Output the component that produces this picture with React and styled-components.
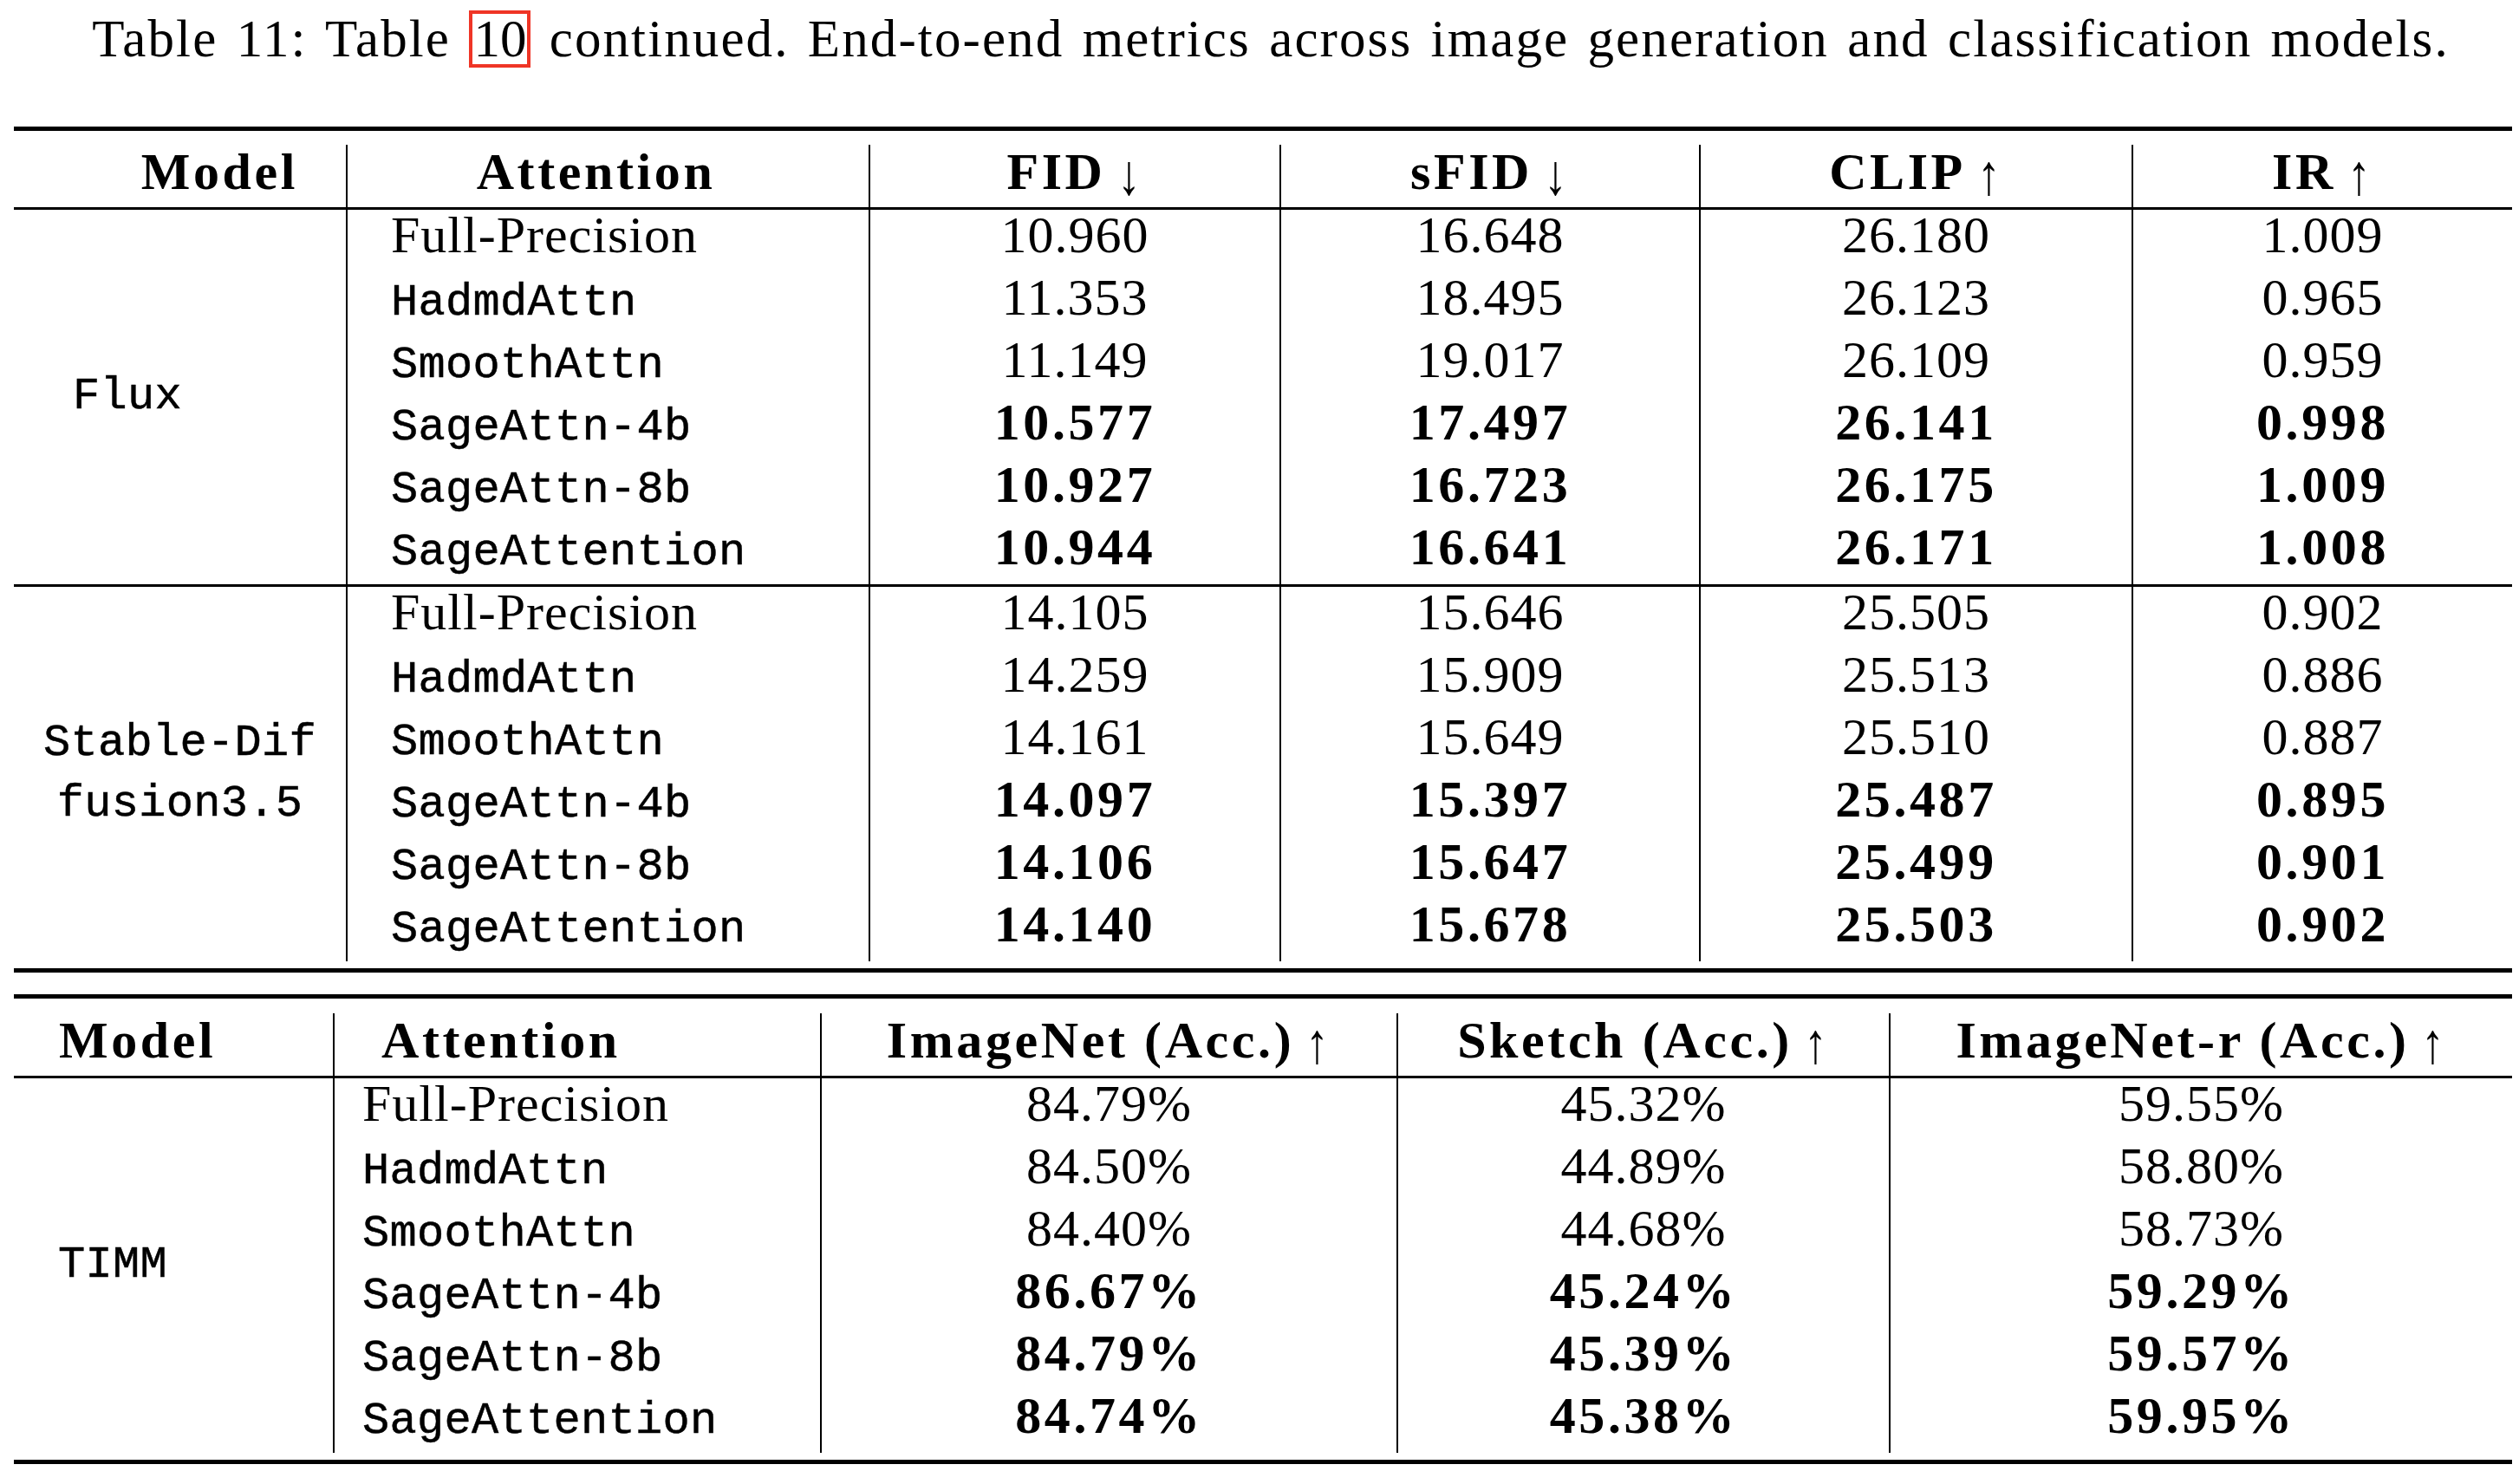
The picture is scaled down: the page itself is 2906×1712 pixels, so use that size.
import React from "react";
import styled, { createGlobalStyle } from "styled-components";

const GlobalStyle = createGlobalStyle`
  html, body {
    margin: 0;
    padding: 0;
    background: #fff;
  }
  body {
    font-family: "Liberation Serif", "Times New Roman", serif;
    color: #000;
  }
`;

const Page = styled.div`
  width: 2906px;
  padding-top: 9px;
`;

const Caption = styled.p`
  margin: 0 0 65px;
  padding-left: 26px;
  text-align: center;
  font-size: 61px;
  line-height: 72px;
  letter-spacing: 2.1px;
  word-spacing: 4px;
`;

const RefBox = styled.span`
  display: inline-block;
  border: 4px solid #ef3526;
  padding: 0 1px;
  line-height: 58px;
  letter-spacing: 0;
`;

const Table = styled.table`
  border-collapse: collapse;
  table-layout: fixed;
  width: 2882px;
  margin: ${({ $top }) => $top}px 0 0 16px;
  border-top: 5px solid #000;
  border-bottom: 5px solid #000;
`;

const Spacer = styled.tr`
  height: ${({ $h }) => $h}px;

  td {
    padding: 0;
    height: ${({ $h }) => $h}px;
  }
`;

const Row = styled.tr`
  height: 72px;
`;

const Cell = styled.td`
  height: 72px;
  padding: 0 ${({ $pr }) => $pr || 0}px 0 ${({ $pl }) => $pl || 0}px;
  text-align: ${({ $align }) => $align || "center"};
  vertical-align: baseline;
  border-left: ${({ $line }) => ($line ? "2px solid #000" : "none")};
  border-bottom: ${({ $head }) => ($head ? "3px solid #000" : "none")};
  border-top: ${({ $mid }) => ($mid ? "3px solid #000" : "none")};
  font-size: 60px;
  line-height: 58px;
  font-weight: ${({ $bold }) => ($bold ? 700 : 400)};
  letter-spacing: ${({ $bold }) => ($bold ? "3.6px" : "1px")};
  white-space: nowrap;
`;

const ModelCell = styled.td`
  padding: 0 0 0 ${({ $pl }) => $pl || 0}px;
  text-align: ${({ $align }) => $align || "left"};
  vertical-align: middle;
  border-top: ${({ $mid }) => ($mid ? "3px solid #000" : "none")};
  font-family: "Liberation Mono", "DejaVu Sans Mono", monospace;
  font-size: 52px;
  line-height: 70px;
  letter-spacing: 0.3px;
  -webkit-text-stroke: 0.5px #000;
  white-space: nowrap;
`;

const Mono = styled.span`
  font-family: "Liberation Mono", "DejaVu Sans Mono", monospace;
  font-size: 52px;
  font-weight: 400;
  letter-spacing: 0.3px;
  -webkit-text-stroke: 0.5px #000;
`;

const Arrow = styled.span`
  display: inline-block;
  font-weight: 400;
  font-size: 66px;
  letter-spacing: 0;
  margin-left: 10px;
  transform: scaleX(0.8) translateY(6px);
`;

const methods = [
  { name: "Full-Precision", mono: false, bold: false },
  { name: "HadmdAttn", mono: true, bold: false },
  { name: "SmoothAttn", mono: true, bold: false },
  { name: "SageAttn-4b", mono: true, bold: true },
  { name: "SageAttn-8b", mono: true, bold: true },
  { name: "SageAttention", mono: true, bold: true },
];

const genSections = [
  {
    model: ["Flux"],
    align: "left",
    pl: 68,
    values: [
      ["10.960", "16.648", "26.180", "1.009"],
      ["11.353", "18.495", "26.123", "0.965"],
      ["11.149", "19.017", "26.109", "0.959"],
      ["10.577", "17.497", "26.141", "0.998"],
      ["10.927", "16.723", "26.175", "1.009"],
      ["10.944", "16.641", "26.171", "1.008"],
    ],
  },
  {
    model: ["Stable-Dif", "fusion3.5"],
    align: "center",
    pl: 0,
    values: [
      ["14.105", "15.646", "25.505", "0.902"],
      ["14.259", "15.909", "25.513", "0.886"],
      ["14.161", "15.649", "25.510", "0.887"],
      ["14.097", "15.397", "25.487", "0.895"],
      ["14.106", "15.647", "25.499", "0.901"],
      ["14.140", "15.678", "25.503", "0.902"],
    ],
  },
];

const timmValues = [
  ["84.79%", "45.32%", "59.55%"],
  ["84.50%", "44.89%", "58.80%"],
  ["84.40%", "44.68%", "58.73%"],
  ["86.67%", "45.24%", "59.29%"],
  ["84.79%", "45.39%", "59.57%"],
  ["84.74%", "45.38%", "59.95%"],
];

const ModelName = ({ lines }) =>
  lines.map((l, i) => (
    <React.Fragment key={l}>
      {i > 0 && <br />}
      {l}
    </React.Fragment>
  ));

const MethodName = ({ m }) => (m.mono ? <Mono>{m.name}</Mono> : m.name);

const App = () => (
  <>
    <GlobalStyle />
    <Page>
      <Caption>
        Table 11: Table <RefBox>10</RefBox> continued. End-to-end metrics
        across image generation and classification models.
      </Caption>

      <Table $top={0}>
        <colgroup>
          <col style={{ width: 384 }} />
          <col style={{ width: 603 }} />
          <col style={{ width: 474 }} />
          <col style={{ width: 484 }} />
          <col style={{ width: 499 }} />
          <col style={{ width: 438 }} />
        </colgroup>
        <tbody>
          <Spacer $h={16}>
            <td colSpan={6} />
          </Spacer>
          <Row>
            <Cell $head $bold $align="right" $pr={55}>
              Model
            </Cell>
            <Cell $head $bold $line $pr={28}>
              Attention
            </Cell>
            <Cell $head $bold $line>
              FID<Arrow>↓</Arrow>
            </Cell>
            <Cell $head $bold $line>
              sFID<Arrow>↓</Arrow>
            </Cell>
            <Cell $head $bold $line>
              CLIP<Arrow>↑</Arrow>
            </Cell>
            <Cell $head $bold $line>
              IR<Arrow>↑</Arrow>
            </Cell>
          </Row>
          {genSections.map((s, si) =>
            methods.map((m, i) => (
              <Row key={`${si}-${m.name}`}>
                {i === 0 && (
                  <ModelCell
                    rowSpan={6}
                    $mid={si > 0}
                    $align={s.align}
                    $pl={s.pl}
                  >
                    <ModelName lines={s.model} />
                  </ModelCell>
                )}
                <Cell $line $align="left" $pl={50} $mid={si > 0 && i === 0}>
                  <MethodName m={m} />
                </Cell>
                {s.values[i].map((v, vi) => (
                  <Cell key={vi} $line $bold={m.bold} $mid={si > 0 && i === 0}>
                    {v}
                  </Cell>
                ))}
              </Row>
            ))
          )}
          <Spacer $h={8}>
            <td colSpan={6} />
          </Spacer>
        </tbody>
      </Table>

      <Table $top={25}>
        <colgroup>
          <col style={{ width: 369 }} />
          <col style={{ width: 562 }} />
          <col style={{ width: 665 }} />
          <col style={{ width: 568 }} />
          <col style={{ width: 718 }} />
        </colgroup>
        <tbody>
          <Spacer $h={17}>
            <td colSpan={5} />
          </Spacer>
          <Row>
            <Cell $head $bold $align="left" $pl={52}>
              Model
            </Cell>
            <Cell $head $bold $line $align="left" $pl={54}>
              Attention
            </Cell>
            <Cell $head $bold $line>
              ImageNet (Acc.)<Arrow>↑</Arrow>
            </Cell>
            <Cell $head $bold $line>
              Sketch (Acc.)<Arrow>↑</Arrow>
            </Cell>
            <Cell $head $bold $line>
              ImageNet-r (Acc.)<Arrow>↑</Arrow>
            </Cell>
          </Row>
          {methods.map((m, i) => (
            <Row key={m.name}>
              {i === 0 && (
                <ModelCell rowSpan={6} $pl={51}>
                  TIMM
                </ModelCell>
              )}
              <Cell $line $align="left" $pl={32}>
                <MethodName m={m} />
              </Cell>
              {timmValues[i].map((v, vi) => (
                <Cell key={vi} $line $bold={m.bold}>
                  {v}
                </Cell>
              ))}
            </Row>
          ))}
          <Spacer $h={8}>
            <td colSpan={5} />
          </Spacer>
        </tbody>
      </Table>
    </Page>
  </>
);

export default App;
